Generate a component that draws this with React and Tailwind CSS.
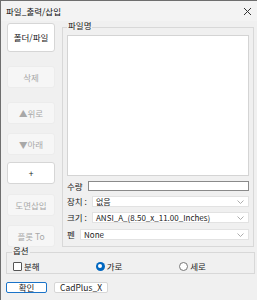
import React from "react";

const font = { fontFamily: '"Noto Sans CJK KR", "Noto Sans", sans-serif' };

function Btn({ children, top, h = 22, enabled }) {
  return (
    <div
      className={`w-[48px] flex items-center justify-center rounded-[3px] text-[8.5px] ${
        enabled ? "bg-white border border-[#d6d6d6] text-[#222]" : "bg-[#f6f6f6] border border-[#ececec] text-[#a8a8a8]"
      }`}
      style={{ marginTop: top, height: h }}
    >
      {children}
    </div>
  );
}

function Select({ children }) {
  return (
    <div className="flex-1 h-[11px] bg-white border border-[#e2e2e2] flex items-center justify-between pl-[3px] pr-[4px] text-[8px] text-[#222]">
      <span className="leading-none">{children}</span>
      <svg width="7" height="4" viewBox="0 0 7 4"><path d="M0.5 0.5 L3.5 3.5 L6.5 0.5" fill="none" stroke="#999" strokeWidth="0.8" /></svg>
    </div>
  );
}

export default function App() {
  return (
    <div className="w-[257px] h-[300px] bg-[#f0f0f0] border-t border-l border-[#6e6e6e] relative overflow-hidden" style={font}>
      <div className="h-[20px] flex items-center justify-between pl-[5px] pr-[5px] bg-[#f3f3f3]">
        <span className="text-[8.5px] text-[#111] leading-none">파일_출력/삽입</span>
        <svg width="9" height="9" viewBox="0 0 9 9"><path d="M1 1 L8 8 M8 1 L1 8" stroke="#333" strokeWidth="1" /></svg>
      </div>
      <div className="flex">
        <div className="ml-[6px] flex flex-col">
          <Btn top={2} h={29} enabled>폴더/파일</Btn>
          <Btn top={14}>삭제</Btn>
          <Btn top={14}>▲위로</Btn>
          <Btn top={9}>▼아래</Btn>
          <Btn top={7} enabled>+</Btn>
          <Btn top={10}>도면삽입</Btn>
          <Btn top={9}>플롯 To</Btn>
        </div>
        <div className="ml-[7px] mt-[6px] w-[192px] h-[220px] border border-[#d8d8d8] relative px-[4px] pt-[7px]">
          <span className="absolute left-[4px] top-[-7px] bg-[#f0f0f0] px-[1px] text-[8.5px] text-[#222] leading-none">파일명</span>
          <div className="h-[141px] bg-white border border-[#d4d4d4]" />
          <div className="flex items-center mt-[5px] text-[8.5px] text-[#222]">
            <span className="w-[21px] leading-none">수량</span>
            <div className="flex-1 h-[10px] bg-white border border-[#8a8a8a]" />
          </div>
          <div className="flex items-center mt-[5px] text-[8.5px] text-[#222]">
            <span className="w-[25px] leading-none">장치 :</span>
            <Select>없음</Select>
          </div>
          <div className="flex items-center mt-[5px] text-[8.5px] text-[#222]">
            <span className="w-[25px] leading-none">크기 :</span>
            <Select>ANSI_A_(8.50_x_11.00_Inches)</Select>
          </div>
          <div className="flex items-center mt-[6px] text-[8.5px] text-[#222]">
            <span className="w-[13px] leading-none">펜</span>
            <Select>None</Select>
          </div>
        </div>
      </div>
      <div className="ml-[5px] mt-[5px] w-[249px] h-[22px] border border-[#d8d8d8] relative flex items-center text-[8.5px] text-[#222]">
        <span className="absolute left-[5px] top-[-7px] bg-[#f0f0f0] px-[1px] leading-none">옵션</span>
        <div className="flex items-center ml-[6px] mt-[6px]">
          <span className="w-[9px] h-[9px] border border-[#555] rounded-[1px] bg-white" />
          <span className="ml-[2px] leading-none">분해</span>
        </div>
        <div className="flex items-center ml-[56px] mt-[6px]">
          <span className="w-[9px] h-[9px] rounded-full bg-[#0067c0] flex items-center justify-center">
            <span className="w-[4px] h-[4px] rounded-full bg-white" />
          </span>
          <span className="ml-[2px] leading-none">가로</span>
        </div>
        <div className="flex items-center ml-[57px] mt-[6px]">
          <span className="w-[9px] h-[9px] rounded-full border border-[#777] bg-white" />
          <span className="ml-[2px] leading-none">세로</span>
        </div>
      </div>
      <div className="flex ml-[5px] mt-[8px] gap-[7px] text-[8.5px] text-[#222]">
        <div className="w-[41px] h-[11px] bg-white border border-[#1a73c8] rounded-[2px] flex items-center justify-center leading-none">확인</div>
        <div className="w-[54px] h-[11px] bg-white border border-[#d6d6d6] rounded-[2px] flex items-center justify-center leading-none">CadPlus_X</div>
      </div>
    </div>
  );
}
